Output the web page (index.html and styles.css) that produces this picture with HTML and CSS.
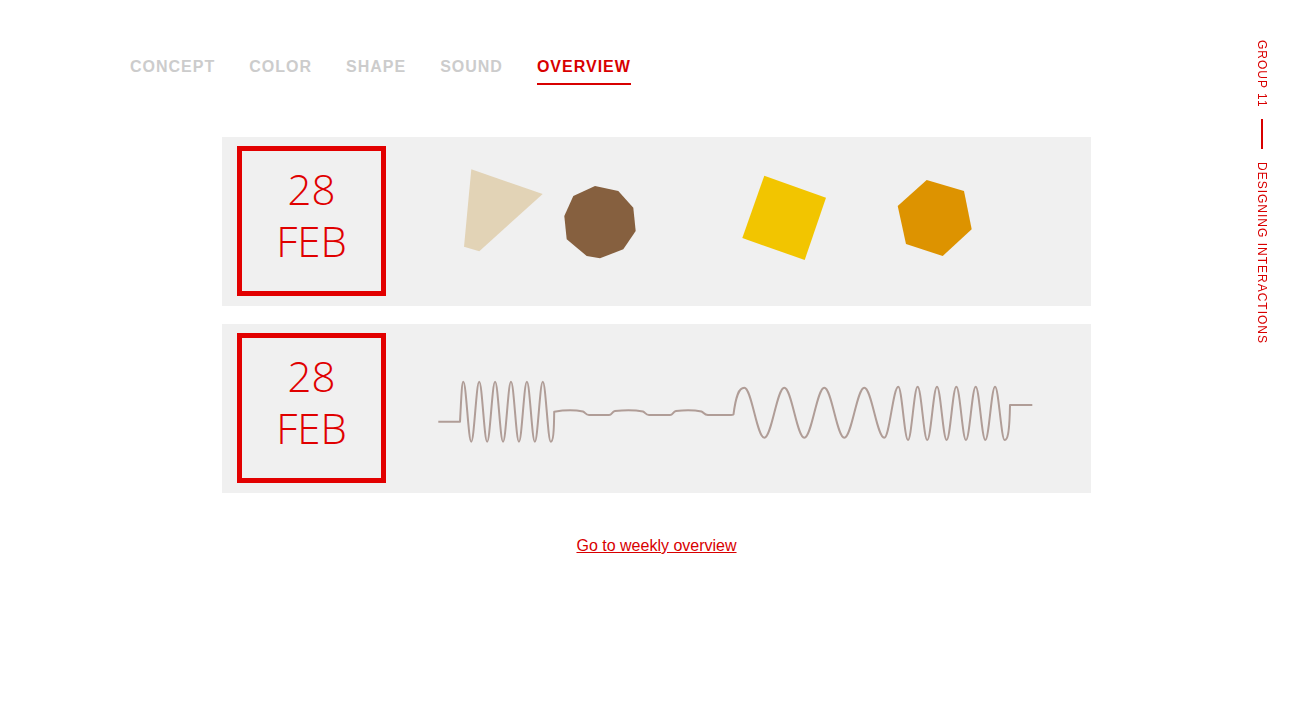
FILE: index.html
```html
<!DOCTYPE html>
<html lang="en">
<head>
<meta charset="utf-8">
<title>Overview</title>
<link rel="stylesheet" href="styles.css">
</head>
<body>
<header class="topnav">
  <a class="nav-item" href="#">CONCEPT</a>
  <a class="nav-item" href="#">COLOR</a>
  <a class="nav-item" href="#">SHAPE</a>
  <a class="nav-item" href="#">SOUND</a>
  <a class="nav-item active" href="#">OVERVIEW</a>
</header>

<aside class="side-label">
  <span>GROUP 11</span>
  <span class="side-line"></span>
  <span>DESIGNING INTERACTIONS</span>
</aside>

<main class="entries">
  <section class="card">
    <div class="date-box"><span>28</span><span>FEB</span></div>
    <svg class="card-art" width="660" height="150" viewBox="0 0 660 150">
      <polygon fill="#e2d3b6" points="71.3,23.3 142.7,48 79.3,105.3 64,100.7"/>
      <polygon fill="#86603f" points="195,40 218.3,45 233.3,61.7 235.7,85 223.3,103.3 200,112.3 186.7,110 166.7,93.3 164.3,70 173.3,50"/>
      <polygon fill="#f2c500" points="364.3,29.7 426,51.7 404.7,114 342.3,92"/>
      <polygon fill="#dd9300" points="526.7,34 564,45 571.7,83.3 542.7,110 506,98 497.7,60"/>
    </svg>
  </section>

  <section class="card">
    <div class="date-box"><span>28</span><span>FEB</span></div>
    <svg class="card-art" width="660" height="150" viewBox="0 0 660 150">
      <path class="wave" d="M38.3,88.7 H60 C61.5,60 62,48.7 63.3,48.7
        C66.2,48.7 68.35,108.7 71.25,108.7
        C74.15,108.7 76.3,48.7 79.2,48.7
        C82.1,48.7 84.25,108.7 87.15,108.7
        C90.05,108.7 92.2,48.7 95.1,48.7
        C98,48.7 100.15,108.7 103.05,108.7
        C105.95,108.7 108.1,48.7 111,48.7
        C113.9,48.7 116.05,108.7 118.95,108.7
        C121.85,108.7 124,48.7 126.9,48.7
        C129.8,48.7 131.95,108.7 134.85,108.7
        C137.75,108.7 139.9,48.7 142.8,48.7
        C145.7,48.7 147.85,108.7 150.75,108.7
        C153,108.7 154,100 154.2,78.7
        C165,77 175,77 183,78.5 C185.5,79.5 185.5,82 189,82 H209
        C212,82 212,78.5 215,78 C225,77 235,77 243,78.5 C245.5,79.5 245.5,82 249,82 H270
        C273,82 273,78.5 276,78 C285,77 294,77 301.5,78.5 C304,79.5 304,82 308,82 H331
        C333,82 333.5,81.5 333.5,81.3
        C336,62 339,54.7 344.3,54.7
        C351.6,54.7 357,104.7 364.3,104.7
        C371.6,104.7 377,54.7 384.3,54.7
        C391.6,54.7 397,104.7 404.3,104.7
        C411.6,104.7 417,54.7 424.3,54.7
        C431.6,54.7 437,104.7 444.3,104.7
        C451.6,104.7 457,54.7 464.3,54.7
        C471.6,54.7 477,104.7 484.3,104.7
        C489.4,104.7 493.2,53.7 498.3,53.7
        C501.8,53.7 504.5,107 508,107
        C511.5,107 514.1,53.7 517.65,53.7
        C521.2,53.7 523.8,107 527.3,107
        C530.8,107 533.5,53.7 537,53.7
        C540.5,53.7 543.1,107 546.65,107
        C550.2,107 552.8,53.7 556.35,53.7
        C559.9,53.7 562.5,107 566,107
        C569.5,107 572.2,53.7 575.7,53.7
        C579.2,53.7 581.8,107 585.35,107
        C588.9,107 591.5,53.7 595.05,53.7
        C598.6,53.7 601.2,107 604.7,107
        C607.5,107 609.5,100 610,72 H632.3"/>
    </svg>
  </section>

  <p class="weekly"><a href="#">Go to weekly overview</a></p>
</main>
</body>
</html>
```

FILE: styles.css
```css
html, body {
  margin: 0;
  padding: 0;
  background: #ffffff;
}

body {
  font-family: "Liberation Sans", Arial, sans-serif;
  color: #d80000;
}

.topnav {
  display: flex;
  gap: 34px;
  padding: 58px 0 0 130px;
}

.nav-item {
  display: inline-block;
  font-size: 16px;
  line-height: 18px;
  font-weight: bold;
  letter-spacing: 1px;
  color: #cccccc;
  text-decoration: none;
  padding-bottom: 7px;
  border-bottom: 2px solid transparent;
}

.nav-item.active {
  color: #d80000;
  border-bottom-color: #d80000;
}

.side-label {
  position: fixed;
  top: 40px;
  right: 45px;
  writing-mode: vertical-rl;
  display: flex;
  align-items: center;
  font-size: 12px;
  line-height: 12px;
  letter-spacing: 1px;
  color: #d80000;
}

.side-line {
  display: block;
  width: 2px;
  height: 30px;
  background: #d80000;
  margin: 11px 0 13px;
}

.entries {
  width: 869px;
  margin: 52px auto 0;
}

.card {
  display: flex;
  align-items: flex-start;
  background: #f0f0f0;
  padding: 9px 15px 10px;
  margin-bottom: 18px;
}

.date-box {
  box-sizing: border-box;
  flex-shrink: 0;
  width: 149px;
  height: 150px;
  border: 5px solid #e20000;
  display: flex;
  flex-direction: column;
  align-items: center;
  padding-top: 12px;
  font-family: "Open Sans", "Liberation Sans", sans-serif;
  font-weight: 300;
  font-size: 42px;
  line-height: 52px;
  color: #e00000;
}

.card-art {
  display: block;
  flex-shrink: 0;
  margin-left: 14px;
}

.wave {
  fill: none;
  stroke: #b09d97;
  stroke-width: 2;
  stroke-linejoin: round;
}

.weekly {
  margin: 44px 0 0;
  text-align: center;
  font-size: 16px;
  line-height: 18px;
}

.weekly a {
  color: #d80000;
  text-decoration: underline;
}
```
